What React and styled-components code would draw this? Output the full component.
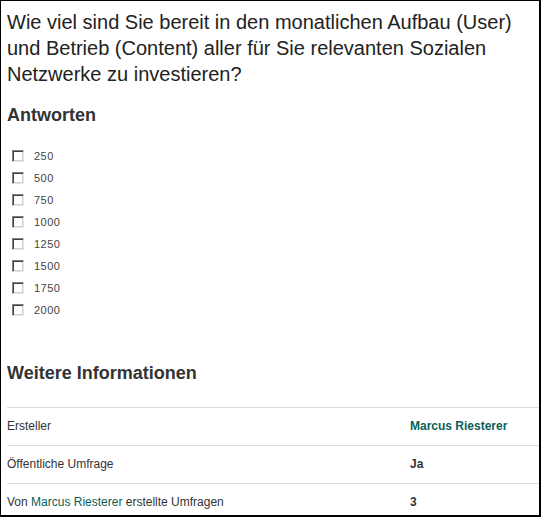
import React from 'react';
import styled, { createGlobalStyle } from 'styled-components';

const answers = [250, 500, 750, 1000, 1250, 1500, 1750, 2000];

const infoRows = [
  { label: 'Ersteller', value: 'Marcus Riesterer', link: true },
  { label: 'Öffentliche Umfrage', value: 'Ja' },
  { label: 'Von', linkLabel: 'Marcus Riesterer', rest: 'erstellte Umfragen', value: '3' },
];

const GlobalStyle = createGlobalStyle`
  html, body {
    margin: 0;
    padding: 0;
    background: #fff;
  }
  body {
    font-family: "Liberation Sans", Arial, sans-serif;
    color: #333;
  }
`;

const Panel = styled.div`
  box-sizing: border-box;
  width: 541px;
  height: 517px;
  overflow: hidden;
  border-style: solid;
  border-color: #000;
  border-width: 1px 2px 2px 1px;
  padding: 0 0 0 6px;
  background: #fff;
`;

const Question = styled.h1`
  margin: 8px 0 0;
  font-size: 20px;
  line-height: 26px;
  font-weight: normal;
  color: #222;
`;

const SectionTitle = styled.h2`
  margin: ${(p) => p.$top}px 0 0;
  font-size: 18px;
  line-height: 21px;
  font-weight: bold;
  color: #333;
`;

const AnswerList = styled.ul`
  list-style: none;
  margin: 19px 0 0;
  padding: 0 0 0 5px;
`;

const AnswerItem = styled.li`
  display: flex;
  align-items: center;
  height: 22px;
`;

const Box = styled.input.attrs({ type: 'checkbox' })`
  appearance: none;
  -webkit-appearance: none;
  box-sizing: border-box;
  width: 12px;
  height: 12px;
  margin: 0 10px 0 0;
  background: #fff;
  border-style: solid;
  border-width: 1px;
  border-color: #808080 #e6e6e6 #e6e6e6 #808080;
  box-shadow: inset 1px 1px 0 #404040, inset -1px -1px 0 #d4d0c8;
`;

const AnswerLabel = styled.label`
  font-size: 11px;
  letter-spacing: 0.5px;
  color: #444;
`;

const InfoTable = styled.div`
  margin-top: 23px;
`;

const InfoRow = styled.div`
  display: grid;
  grid-template-columns: 403px 1fr;
  border-top: 1px solid #ddd;
  padding: 11px 0;
  font-size: 12px;
  line-height: 15px;
`;

const InfoLabel = styled.div`
  color: #333;
`;

const InfoValue = styled.div`
  font-weight: bold;
  color: ${(p) => (p.$link ? '#0b5f57' : '#333')};
`;

const Link = styled.a`
  color: #0b5f57;
  text-decoration: none;
`;

export default function App() {
  return (
    <>
      <GlobalStyle />
      <Panel>
        <Question>
          Wie viel sind Sie bereit in den monatlichen Aufbau (User) und Betrieb (Content) aller für Sie
          relevanten Sozialen Netzwerke zu investieren?
        </Question>
        <SectionTitle $top={18}>Antworten</SectionTitle>
        <AnswerList>
          {answers.map((a) => (
            <AnswerItem key={a}>
              <Box id={`a${a}`} />
              <AnswerLabel htmlFor={`a${a}`}>{a}</AnswerLabel>
            </AnswerItem>
          ))}
        </AnswerList>
        <SectionTitle $top={42}>Weitere Informationen</SectionTitle>
        <InfoTable>
          {infoRows.map((r, i) => (
            <InfoRow key={i}>
              <InfoLabel>
                {r.linkLabel ? (
                  <>
                    {r.label} <Link href="#">{r.linkLabel}</Link> {r.rest}
                  </>
                ) : (
                  r.label
                )}
              </InfoLabel>
              <InfoValue $link={r.link}>{r.value}</InfoValue>
            </InfoRow>
          ))}
        </InfoTable>
      </Panel>
    </>
  );
}
